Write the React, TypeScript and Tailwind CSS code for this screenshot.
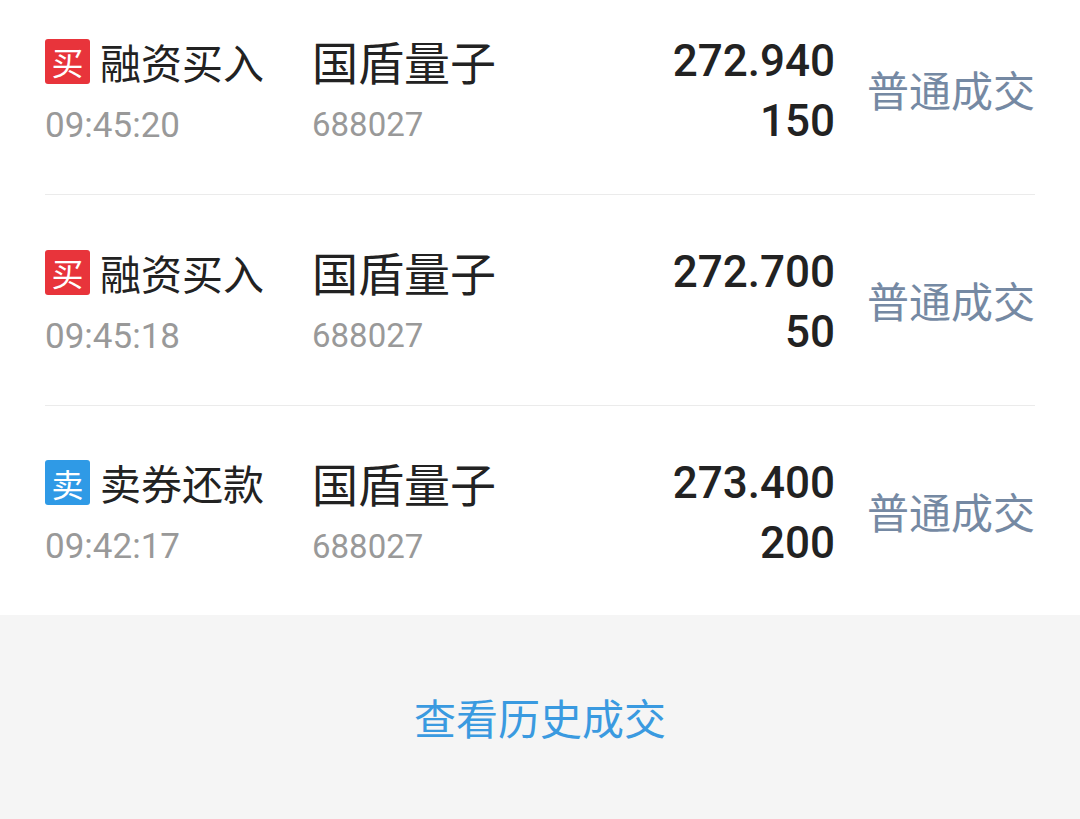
import type { ReactNode } from 'react'

type Deal = {
  side: 'buy' | 'sell'
  action: string
  time: string
  name: string
  code: string
  price: string
  qty: string
  status: string
}

const deals: Deal[] = [
  { side: 'buy', action: '融资买入', time: '09:45:20', name: '国盾量子', code: '688027', price: '272.940', qty: '150', status: '普通成交' },
  { side: 'buy', action: '融资买入', time: '09:45:18', name: '国盾量子', code: '688027', price: '272.700', qty: '50', status: '普通成交' },
  { side: 'sell', action: '卖券还款', time: '09:42:17', name: '国盾量子', code: '688027', price: '273.400', qty: '200', status: '普通成交' },
]

const cjk = "font-['Noto_Sans_CJK_SC','Noto_Sans',sans-serif]"
const num = "font-['Roboto','Noto_Sans_CJK_SC',sans-serif]"

function Tag({ side }: { side: Deal['side'] }) {
  return (
    <span
      className={`flex h-[45px] w-[45px] shrink-0 items-center justify-center rounded-[3px] text-[32px] leading-none text-white ${cjk} ${
        side === 'buy' ? 'bg-[#e8343b]' : 'bg-[#2f9ae6]'
      }`}
    >
      {side === 'buy' ? '买' : '卖'}
    </span>
  )
}

function Row({ deal, first, last }: { deal: Deal; first?: boolean; last?: boolean }): ReactNode {
  return (
    <div
      className={`flex items-center ${first ? 'h-[211px] -mt-[16px]' : last ? 'h-[209px]' : 'h-[211px]'} ${
        last ? '' : 'border-b border-[#ebebeb]'
      }`}
    >
      <div className="flex w-[267px] flex-col pt-[6px]">
        <div className="flex items-center gap-[10px]">
          <Tag side={deal.side} />
          <span className={`text-[41px] leading-[45px] text-[#222] ${cjk}`}>{deal.action}</span>
        </div>
        <span className={`mt-[22px] text-[35px] leading-[40px] text-[#999] ${num}`}>{deal.time}</span>
      </div>
      <div className="flex flex-1 flex-col pt-[2px]">
        <span className={`text-[46px] leading-[50px] text-[#222] ${cjk}`}>{deal.name}</span>
        <span className={`mt-[20px] text-[33px] leading-[40px] text-[#999] ${num}`}>{deal.code}</span>
      </div>
      <div className={`mr-[-2px] flex flex-col items-end pt-[4px] text-[44px] font-medium leading-[60px] text-[#222] ${num}`}>
        <span>{deal.price}</span>
        <span>{deal.qty}</span>
      </div>
      <span className={`ml-[34px] text-[42px] leading-none text-[#7589a3] ${cjk}`}>{deal.status}</span>
    </div>
  )
}

export default function App() {
  return (
    <div className="flex h-[819px] w-[1080px] flex-col overflow-hidden bg-white">
      <div className="px-[45px]">
        {deals.map((d, i) => (
          <Row key={i} deal={d} first={i === 0} last={i === deals.length - 1} />
        ))}
      </div>
      <div className="flex flex-1 items-center justify-center bg-[#f5f5f5]">
        <span className={`text-[42px] leading-none text-[#3a9ae0] ${cjk}`}>查看历史成交</span>
      </div>
    </div>
  )
}
